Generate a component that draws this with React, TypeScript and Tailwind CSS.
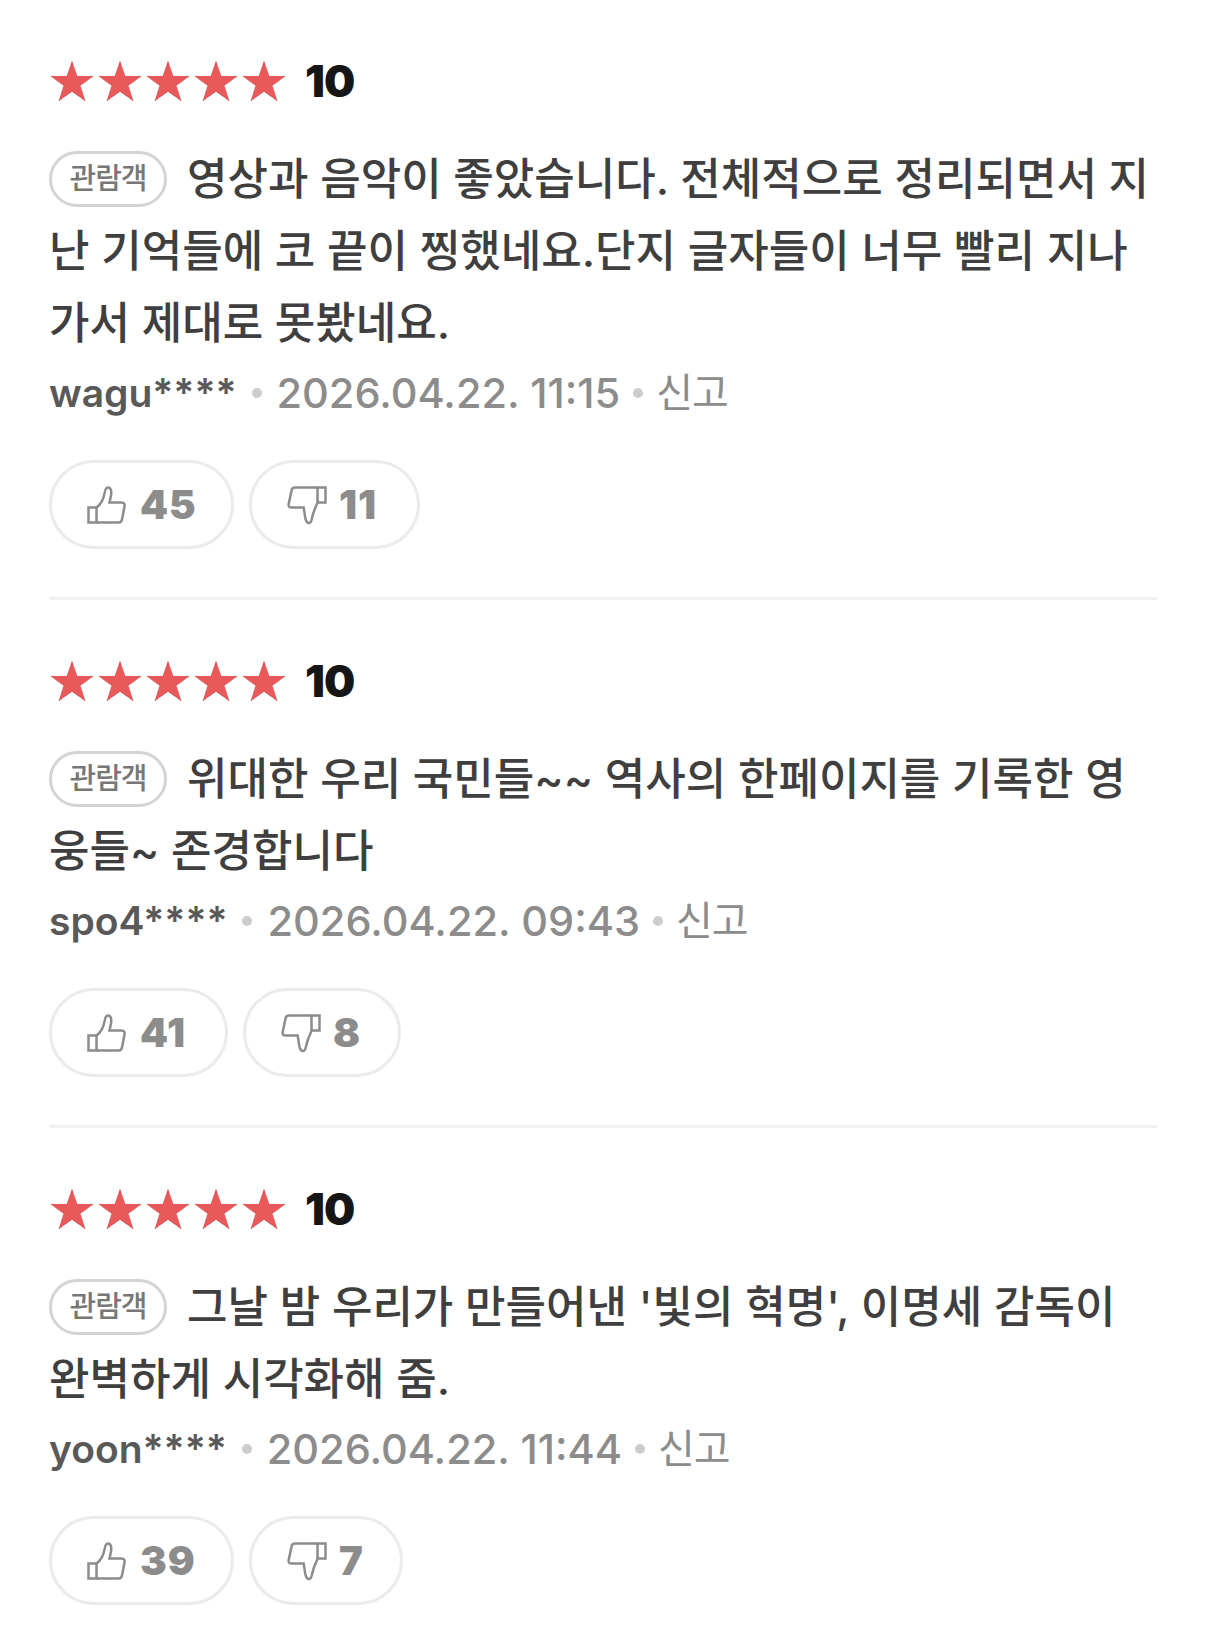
function Star() {
    return (
        <svg viewBox="0 0 44 42" className="w-[44px] h-[42px] fill-[#e85a5a] shrink-0">
            <path d="M22 .5l5.300 15.400H43.800L30.500 25.700 35.600 41.500 22 31.800 8.400 41.500l5.100-15.800L.200 15.900H16.700z" />
        </svg>
    );
}

function ThumbUp() {
    return (
        <svg viewBox="0 0 40 40" className="w-[40px] h-[40px] fill-none stroke-[#8c8c8c] stroke-[2.500] shrink-0">
            <path d="M1.500 22.500h8v15h-8z" />
            <path d="M9.500 22.500c4-3 7-8 8-14 .5-3 1-6 3.500-6 3.500 0 3.500 5 3 8l-1.500 7h12c2.500 0 3.500 1.500 3 4l-2.500 13c-.3 2-1.500 3-3.500 3h-22.500" />
        </svg>
    );
}

function ThumbDown() {
    return (
        <svg viewBox="0 0 40 40" className="w-[40px] h-[40px] fill-none stroke-[#8c8c8c] stroke-[2.500] shrink-0">
            <path d="M38.500 17.500h-8v-15h8z" />
            <path d="M30.500 2.500H8c-2 0-3.200 1-3.500 3L1.700 19c-.5 2.500.5 3.500 3 3.500h12l1.500 10c.5 3 1.500 5.500 4 5.500 1.500 0 2-1.500 2.500-3.500 1-5 3-11 6-17" />
        </svg>
    );
}

type Review = {
    lines: string[];
    user: string;
    date: string;
    up: number;
    down: number;
    upWidth: string;
    downWidth: string;
};

const reviews: Review[] = [
    {
        lines: ["영상과 음악이 좋았습니다. 전체적으로 정리되면서 지", "난 기억들에 코 끝이 찡했네요.단지 글자들이 너무 빨리 지나", "가서 제대로 못봤네요."],
        user: "wagu****",
        date: "2026.04.22. 11:15",
        up: 45,
        down: 11,
        upWidth: "w-[185px]",
        downWidth: "w-[171px]",
    },
    {
        lines: ["위대한 우리 국민들~~ 역사의 한페이지를 기록한 영", "웅들~ 존경합니다"],
        user: "spo4****",
        date: "2026.04.22. 09:43",
        up: 41,
        down: 8,
        upWidth: "w-[179px]",
        downWidth: "w-[158px]",
    },
    {
        lines: ["그날 밤 우리가 만들어낸 '빛의 혁명', 이명세 감독이", "완벽하게 시각화해 줌."],
        user: "yoon****",
        date: "2026.04.22. 11:44",
        up: 39,
        down: 7,
        upWidth: "w-[185px]",
        downWidth: "w-[154px]",
    },
];

function ReviewItem({ review, last }: { review: Review; last: boolean }) {
    return (
        <div className={last ? "pt-[58px]" : "pt-[58px] pb-[48px] border-b-[3px] border-[#f1f1f1]"}>
            <div className="flex items-center h-[46px] pl-[1px]">
                <div className="flex gap-[4px]">
                    <Star />
                    <Star />
                    <Star />
                    <Star />
                    <Star />
                </div>
                <span className="ml-[19px] text-[44px] font-black text-[#161616] tracking-[-1px]">10</span>
            </div>
            <div className="mt-[39px] text-[44px] leading-[72px] font-medium text-[#3f3f3f]">
                {review.lines.map((line, i) => (
                    <div key={i} className="flex items-center whitespace-nowrap h-[72px]">
                        {i === 0 && (
                            <span className="inline-flex items-center justify-center w-[118px] h-[56px] mr-[20px] rounded-full border-[3px] border-[#d4d4d4] text-[29px] text-[#777777] font-medium tracking-[-1px] shrink-0">
                                관람객
                            </span>
                        )}
                        {line}
                    </div>
                ))}
            </div>
            <div className="flex items-center h-[68px] text-[41.500px] text-[#8c8c8c] whitespace-nowrap">
                <span className="text-[39px] text-[#595959] font-semibold">{review.user}</span>
                <span className="w-[10px] h-[10px] rounded-full bg-[#cccccc] mx-[15px]"></span>
                <span className="font-medium">{review.date}</span>
                <span className="w-[10px] h-[10px] rounded-full bg-[#cccccc] mx-[13px]"></span>
                <span className="text-[40px] tracking-[-1px]">신고</span>
            </div>
            <div className="mt-[33px] flex gap-[15px]">
                <div className={`${review.upWidth} h-[89px] rounded-full border-[3px] border-[#ebebeb] flex items-center pl-[35px] gap-[13px]`}>
                    <ThumbUp />
                    <span className="text-[40px] font-black tracking-[1px] text-[#8c8c8c]">{review.up}</span>
                </div>
                <div className={`${review.downWidth} h-[89px] rounded-full border-[3px] border-[#ebebeb] flex items-center pl-[35px] gap-[12px]`}>
                    <ThumbDown />
                    <span className="text-[40px] font-black tracking-[1px] text-[#8c8c8c]">{review.down}</span>
                </div>
            </div>
        </div>
    );
}

function App() {
    return (
        <div className="w-[1206px] h-[1650px] bg-white px-[49px] overflow-hidden font-['Inter','Noto_Sans_CJK_KR',sans-serif]">
            {reviews.map((review, i) => (
                <ReviewItem key={review.user} review={review} last={i === reviews.length - 1} />
            ))}
        </div>
    );
}

export default App;
